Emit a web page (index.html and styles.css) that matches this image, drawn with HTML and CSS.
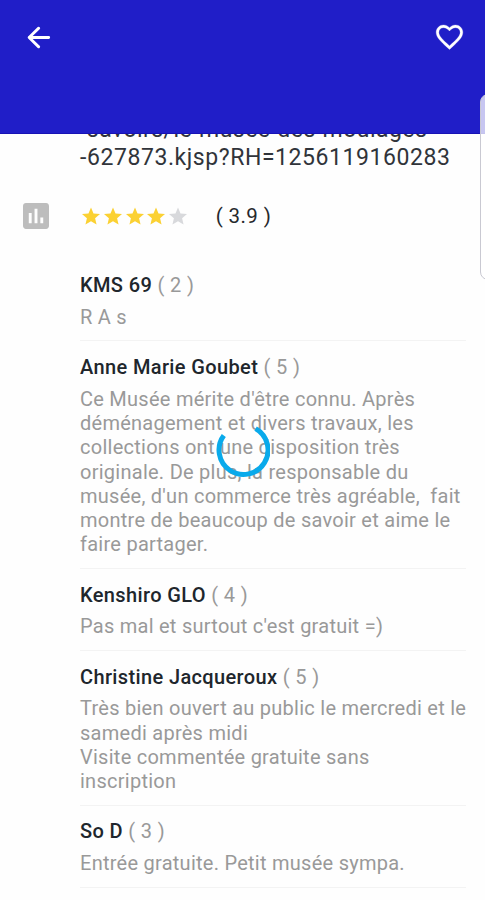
FILE: index.html
```html
<!DOCTYPE html>
<html lang="fr">
<head>
<meta charset="utf-8">
<title>Avis</title>
<link rel="stylesheet" href="styles.css">
</head>
<body>
<div class="screen">
  <header class="bar">
    <svg class="back" viewBox="0 0 24 24"><path d="M21.8 12H3M12.2 3L3 12l9.2 9"/></svg>
    <svg class="heart" viewBox="0 0 24 24"><path d="M16.5 3c-1.74 0-3.41.81-4.5 2.09C10.91 3.81 9.24 3 7.5 3 4.42 3 2 5.42 2 8.5c0 3.78 3.4 6.86 8.55 11.54L12 21.35l1.45-1.32C18.6 15.36 22 12.28 22 8.5 22 5.42 19.58 3 16.5 3zm-4.4 15.55l-.1.1-.1-.1C7.14 14.24 4 11.39 4 8.5 4 6.5 5.5 5 7.500 5c1.74 0 3.41 1.2 4.5 2.5C13.09 6.2 14.76 5 16.5 5c2 0 3.5 1.5 3.5 3.5 0 2.89-3.14 5.74-7.9 10.05z"/></svg>
  </header>
  <main class="content">
    <div class="link"><p>-savoirs/le-musee-des-moulages</p><p class="tail">-627873.kjsp?RH=1256119160283</p></div>
    <div class="rating">
      <svg class="chart" viewBox="3 3 18 18"><path d="M19 3H5c-1.1 0-2 .9-2 2v14c0 1.100.9 2 2 2h14c1.1 0 2-.9 2-2V5c0-1.1-.9-2-2-2zM9 17H7v-7h2v7zm4 0h-2V7h2v10zm4 0h-2v-4h2v4z"/></svg>
      <div class="stars">
        <svg class="star" viewBox="2 2 20 19"><path d="M12 17.27L18.18 21l-1.64-7.03L22 9.24l-7.19-.61L12 2 9.19 8.63 2 9.24l5.46 4.73L5.82 21z"/></svg>
        <svg class="star" viewBox="2 2 20 19"><path d="M12 17.27L18.18 21l-1.64-7.03L22 9.24l-7.19-.61L12 2 9.19 8.63 2 9.24l5.46 4.73L5.82 21z"/></svg>
        <svg class="star" viewBox="2 2 20 19"><path d="M12 17.27L18.18 21l-1.64-7.03L22 9.24l-7.19-.61L12 2 9.19 8.63 2 9.24l5.46 4.73L5.82 21z"/></svg>
        <svg class="star" viewBox="2 2 20 19"><path d="M12 17.27L18.18 21l-1.64-7.03L22 9.24l-7.19-.61L12 2 9.19 8.63 2 9.24l5.46 4.73L5.82 21z"/></svg>
        <svg class="star empty" viewBox="2 2 20 19"><path d="M12 17.27L18.18 21l-1.64-7.03L22 9.24l-7.19-.61L12 2 9.19 8.63 2 9.24l5.46 4.73L5.82 21z"/></svg>
      </div>
      <span class="score">( 3.9 )</span>
    </div>
    <section class="reviews">
      <article class="review"><h2><b>KMS 69</b> ( 2 )</h2><p>R A s</p></article>
      <article class="review"><h2><b>Anne Marie Goubet</b> ( 5 )</h2><p>Ce Musée mérite d'être connu. Après<br>déménagement et divers travaux, les<br>collections ont une disposition très<br>originale. De plus, la responsable du<br>musée, d'un commerce très agréable,&nbsp; fait<br>montre de beaucoup de savoir et aime le<br>faire partager.</p></article>
      <article class="review"><h2><b>Kenshiro GLO</b> ( 4 )</h2><p>Pas mal et surtout c'est gratuit =)</p></article>
      <article class="review"><h2><b>Christine Jacqueroux</b> ( 5 )</h2><p>Très bien ouvert au public le mercredi et le<br>samedi après midi<br>Visite commentée gratuite sans<br>inscription</p></article>
      <article class="review"><h2><b>So D</b> ( 3 )</h2><p>Entrée gratuite. Petit musée sympa.</p></article>
    </section>
  </main>
  <svg class="spinner" viewBox="0 0 54 54"><path d="M7.8 12.4A24.5 24.5 0 1 0 39.6 5.600"/></svg>
  <div class="edge-panel"></div>
</div>
</body>
</html>
```
FILE: styles.css
```css
* { box-sizing: border-box; }
body { margin: 0; background: #fefefe; font-family: Roboto, sans-serif; }
h2, p { margin: 0; }
svg { display: block; }
.screen { position: relative; height: 900px; overflow: hidden; display: flex; flex-direction: column; }
.bar {
  flex: none; height: 134px; padding: 24px 21px 0 26px;
  display: flex; justify-content: space-between; align-items: flex-start;
  background: #201ec8; border-bottom: 1px solid #1712b4;
}
.back { width: 25px; height: 25px; fill: none; stroke: #fff; stroke-width: 2.7; stroke-linecap: round; stroke-linejoin: round; margin-top: 1px; }
.heart { width: 33px; height: 32px; margin: -3px -2px 0 0; fill: #fff; stroke: #fff; stroke-width: .2; }
.content { flex: 1; min-height: 0; overflow: hidden; }
.link { margin: -18.5px 0 0 80px; font-size: 23px; line-height: 28px; color: #30343a; white-space: nowrap; letter-spacing: .46px; }
.link .tail { letter-spacing: .57px; }
.rating { display: flex; align-items: center; height: 30px; margin-top: 29px; padding-left: 23px; }
.chart { width: 26px; height: 26px; fill: #bdbdbd; }
.stars { display: flex; gap: 3.8px; margin-left: 33px; }
.star { width: 18px; height: 18px; fill: #fbd133; }
.empty { fill: #d8d9dc; }
.score { margin-left: 28.5px; font-size: 20.5px; color: #25282c; letter-spacing: .4px; }
.reviews { margin: 28.5px 19px 0 80px; }
.review { padding: 13.8px 0 11px; border-bottom: 1px solid #f3f3f3; color: #999; font-size: 20px; line-height: 24.3px; white-space: nowrap; letter-spacing: .26px; }
.review h2 { font-size: 20px; font-weight: 400; margin-bottom: 7.6px; letter-spacing: .37px; }
.review b { font-weight: 500; color: #20262c; }
.spinner { position: absolute; left: 216px; top: 423px; width: 54px; height: 54px; fill: none; stroke: #09aaeb; stroke-width: 5; }
.edge-panel { position: absolute; right: -12px; top: 94px; width: 17px; height: 186px; border: 1px solid #c9c9d2; border-radius: 8px; background: rgba(255,255,255,.75); }
```
